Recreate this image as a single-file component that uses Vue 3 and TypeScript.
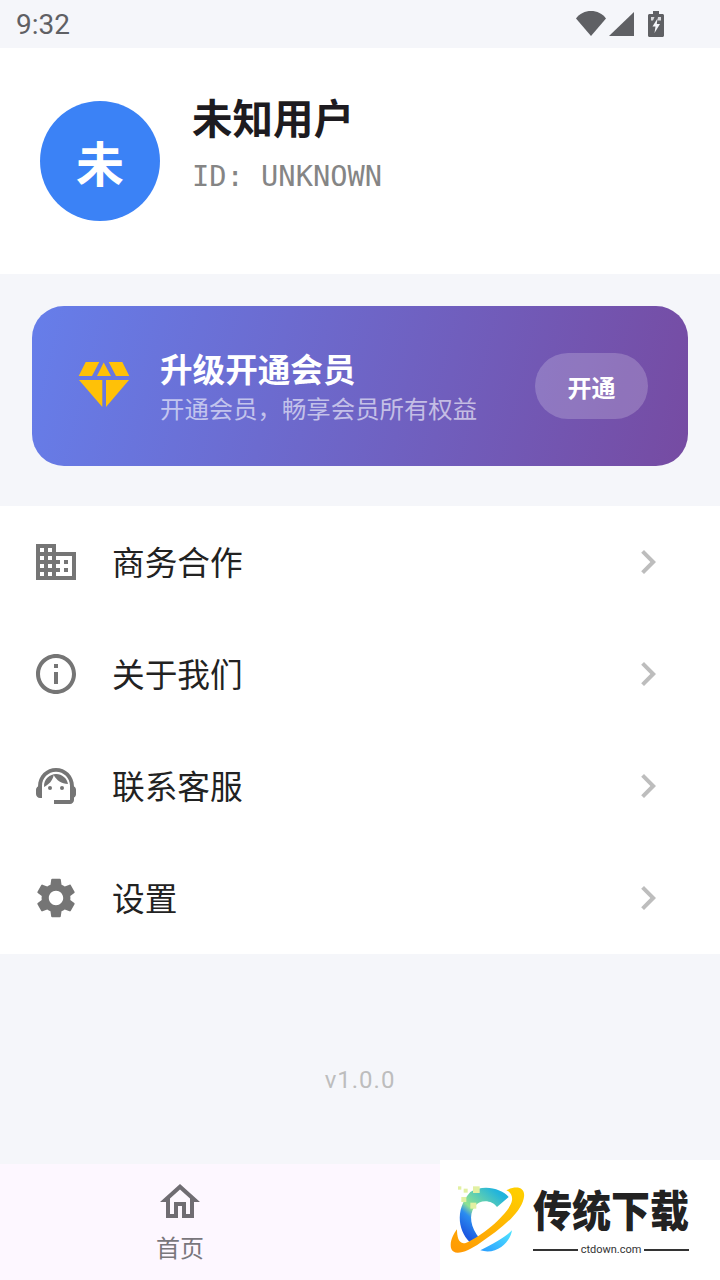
<script setup lang="ts">
interface MenuItem {
  label: string
  paths: string[]
  dots?: number[][]
}

const menu: MenuItem[] = [
  {
    label: '商务合作',
    paths: ['M12 7V3H2v18h20V7H12zM6 19H4v-2h2v2zm0-4H4v-2h2v2zm0-4H4V9h2v2zm0-4H4V5h2v2zm4 12H8v-2h2v2zm0-4H8v-2h2v2zm0-4H8V9h2v2zm0-4H8V5h2v2zm10 12h-8v-2h2v-2h-2v-2h2v-2h-2V9h8v10zm-2-8h-2v2h2v-2zm0 4h-2v2h2v-2z'],
  },
  {
    label: '关于我们',
    paths: ['M11 7h2v2h-2zm0 4h2v6h-2zm1-9C6.48 2 2 6.48 2 12s4.48 10 10 10 10-4.48 10-10S17.52 2 12 2zm0 18c-4.41 0-8-3.59-8-8s3.59-8 8-8 8 3.59 8 8-3.59 8-8 8z'],
  },
  {
    label: '联系客服',
    paths: [
      'M21 12.22C21 6.73 16.74 3 12 3c-4.69 0-9 3.65-9 9.28-.6.34-1 .98-1 1.72v2c0 1.1.9 2 2 2h1v-6.1c0-3.87 3.13-7 7-7s7 3.13 7 7V19h-8v2h8c1.1 0 2-.9 2-2v-1.22c.59-.31 1-.92 1-1.64v-2.3c0-.7-.41-1.31-1-1.62z',
      'M18 11.03C17.52 8.18 15.04 6 12.05 6c-3.03 0-6.29 2.51-6.03 6.45 2.47-1.01 4.33-3.21 4.86-5.89 1.31 2.63 4 4.44 7.12 4.47z',
    ],
    dots: [[9, 13], [15, 13]],
  },
  {
    label: '设置',
    paths: ['M19.14 12.94c.04-.3.06-.61.06-.94 0-.32-.02-.64-.07-.94l2.03-1.58c.18-.14.23-.41.12-.61l-1.92-3.32c-.12-.22-.37-.29-.59-.22l-2.39.96c-.5-.38-1.03-.7-1.62-.94l-.36-2.54c-.04-.24-.24-.41-.48-.41h-3.84c-.24 0-.43.17-.47.41l-.36 2.54c-.59.24-1.13.57-1.62.94l-2.39-.96c-.22-.08-.47 0-.59.22L2.74 8.87c-.12.21-.08.47.12.61l2.03 1.58c-.05.3-.09.63-.09.94s.02.64.07.94l-2.03 1.58c-.18.14-.23.41-.12.61l1.92 3.32c.12.22.37.29.59.22l2.39-.96c.5.38 1.03.7 1.62.94l.36 2.54c.05.24.24.41.48.41h3.84c.24 0 .44-.17.47-.41l.36-2.54c.59-.24 1.13-.56 1.62-.94l2.39.96c.22.08.47 0 .59-.22l1.92-3.32c.12-.22.07-.47-.12-.61l-2.01-1.58zM12 15.6c-1.98 0-3.6-1.62-3.6-3.6s1.62-3.6 3.6-3.6 3.6 1.62 3.6 3.6-1.62 3.6-3.6 3.6z'],
  },
]
</script>

<template>
  <div class="page">
    <div class="status">
      <span class="time">9:32</span>
      <div class="status-icons">
        <svg width="30" height="25" viewBox="0 0 30 25"><path d="M0 7.500C3.500 2.500 9 0 15 0s11.500 2.500 15 7.500L15 25z" /></svg>
        <svg width="25" height="24" viewBox="0 0 25 24"><path d="M25 0v24H0z" /></svg>
        <svg width="16" height="26" viewBox="0 0 16 26">
          <path d="M5 0h6v3h3.500c.8 0 1.500.7 1.500 1.500v20c0 .8-.7 1.500-1.500 1.500h-13C.7 26 0 25.300 0 24.500v-20C0 3.700.7 3 1.500 3H5z" />
          <path class="bat-gap" d="M3 6h3.500L5 9.500H3zM10 6h3v3.500h-3.500z" />
          <path class="bat-bolt" d="M9.500 7.500 4.500 15.500h3L6.500 22l5.500-9H8.800z" />
        </svg>
      </div>
    </div>

    <header class="profile">
      <div class="avatar">未</div>
      <div class="who">
        <div class="name">未知用户</div>
        <div class="uid">ID: UNKNOWN</div>
      </div>
    </header>

    <section class="promo-wrap">
      <div class="promo">
        <svg class="gem" width="52" height="47" viewBox="78 361 52 47">
          <path d="M85.700 362h13.600L92 376H78.700zM103.700 362.500 111 376H97zM108.700 362h13.600l7 14H116zM79 380h23.300v27zM106 380h23l-23 27z" />
        </svg>
        <div class="promo-text">
          <div class="promo-title">升级开通会员</div>
          <div class="promo-sub">开通会员，畅享会员所有权益</div>
        </div>
        <button class="open-btn">开通</button>
      </div>
    </section>

    <nav class="menu">
      <div v-for="item in menu" :key="item.label" class="row">
        <svg class="row-icon" width="48" height="48" viewBox="0 0 24 24">
          <path v-for="d in item.paths" :key="d" :d="d" />
          <circle v-for="c in item.dots" :key="c[0]" :cx="c[0]" :cy="c[1]" r="1" />
        </svg>
        <span class="row-label">{{ item.label }}</span>
        <svg class="chev" width="48" height="48" viewBox="0 0 24 24"><path d="M10 6 8.590 7.410 13.170 12l-4.580 4.590L10 18l6-6z" /></svg>
      </div>
    </nav>

    <div class="version">v1.0.0</div>

    <footer class="tabs">
      <div class="tab">
        <svg width="48" height="48" viewBox="0 0 24 24"><path d="M12 5.690l5 4.500V18h-2v-6H9v6H7v-7.810l5-4.500M12 3L2 12h3v8h6v-6h2v6h6v-8h3L12 3z" /></svg>
        <span>首页</span>
      </div>
    </footer>

    <div class="mark">
      <svg class="mark-logo" width="80" height="74" viewBox="50 80 240 222">
        <defs>
          <linearGradient id="ring" x1="0.8" y1="0" x2="0.1" y2="1">
            <stop offset="0" stop-color="#ffcd00" />
            <stop offset="1" stop-color="#ff9a05" />
          </linearGradient>
          <linearGradient id="cee" x1="0.8" y1="0.1" x2="0.2" y2="0.9">
            <stop offset="0" stop-color="#22b4dc" />
            <stop offset="0.55" stop-color="#8fe390" />
            <stop offset="0.7" stop-color="#2b8df0" />
            <stop offset="1" stop-color="#1c58e0" />
          </linearGradient>
          <linearGradient id="swoosh" x1="0" y1="1" x2="1" y2="0">
            <stop offset="0" stop-color="#2a9cff" />
            <stop offset="1" stop-color="#50e6ff" />
          </linearGradient>
        </defs>
        <path fill="url(#cee)" d="M120 110C160 85 215 100 235 125L200 155C185 135 150 130 132 155 115 180 120 215 148 250L125 266C85 235 70 165 120 110Z" />
        <path fill="url(#ring)" d="M228 105C262 88 288 98 280 130 268 180 200 228 150 262 110 290 70 305 62 278 58 258 68 238 80 222 80 245 85 270 108 262 160 240 240 170 245 135 247 120 240 110 228 105Z" />
        <path fill="url(#swoosh)" d="M150 285C190 265 225 245 245 225 240 260 200 300 150 285Z" />
        <g fill="#e2f0a2">
          <rect x="83" y="93" width="10" height="10" />
          <rect x="100" y="100" width="12" height="12" />
          <rect x="128" y="93" width="20" height="20" />
          <rect x="93" y="125" width="15" height="15" />
          <rect x="120" y="142" width="18" height="18" />
        </g>
      </svg>
      <div class="mark-text">
        <div class="mark-name">传统下载</div>
        <div class="mark-url"><i />ctdown.com<i /></div>
      </div>
    </div>
  </div>
</template>

<style>
html, body {
  margin: 0;
  background: #f5f6fa;
}
</style>

<style scoped>
.page {
  position: relative;
  display: flex;
  flex-direction: column;
  width: 720px;
  height: 1280px;
  overflow: hidden;
  background: #f5f6fa;
  font-family: "Noto Sans CJK SC", "Noto Sans", sans-serif;
  color: #222;
}

.status {
  display: flex;
  align-items: center;
  justify-content: space-between;
  height: 48px;
  padding: 0 56px 0 16px;
  box-sizing: border-box;
}

.time {
  font: 28px Roboto, sans-serif;
  color: #5f6064;
}

.status-icons {
  display: flex;
  align-items: center;
  gap: 3px;
  margin-top: -1px;
  fill: #5f6064;
}

.status-icons svg:last-child {
  margin-left: 11px;
}

.bat-gap {
  fill: #d8d9dc;
}

.bat-bolt {
  fill: #f5f6fa;
}

.profile {
  display: flex;
  align-items: center;
  gap: 33px;
  height: 226px;
  padding-left: 40px;
  box-sizing: border-box;
  background: #fff;
}

.avatar {
  display: flex;
  align-items: center;
  justify-content: center;
  width: 120px;
  height: 120px;
  border-radius: 50%;
  background: #3b82f6;
  color: #fff;
  font-size: 48px;
  font-weight: 700;
}

.who {
  margin-top: -38px;
  margin-left: -1px;
}

.name {
  font-size: 40.500px;
  font-weight: 700;
  line-height: 56px;
  color: #1d1b20;
}

.uid {
  margin-top: 12px;
  font: 28.700px "DejaVu Sans Mono", monospace;
  line-height: 38px;
  color: #858585;
}

.promo-wrap {
  padding: 32px 32px 40px;
}

.promo {
  display: flex;
  align-items: center;
  height: 160px;
  padding: 0 40px 0 46px;
  box-sizing: border-box;
  border-radius: 32px;
  background: linear-gradient(103.700deg, #667eea 0%, #764ba2 100%);
}

.gem {
  fill: #ffc107;
  flex: none;
  margin-top: -3px;
}

.promo-text {
  flex: 1;
  margin: -2px 0 0 30px;
}

.promo-title {
  font-size: 32.600px;
  font-weight: 700;
  line-height: 44px;
  margin-bottom: 2px;
  color: #fff;
}

.promo-sub {
  font-size: 24.400px;
  line-height: 32px;
  color: rgba(255, 255, 255, 0.6);
}

.open-btn {
  width: 113px;
  height: 66px;
  padding: 0;
  border: 0;
  border-radius: 33px;
  background: rgba(255, 255, 255, 0.2);
  color: #fff;
  font-family: inherit;
  font-size: 24px;
  font-weight: 700;
}

.menu {
  background: #fff;
}

.row {
  display: flex;
  align-items: center;
  height: 112px;
  padding: 0 48px 0 32px;
}

.row-icon {
  fill: #757575;
  flex: none;
}

.row-label {
  flex: 1;
  margin: 0 0 4px 32px;
  font-size: 32.700px;
  color: #222;
}

.chev {
  fill: #bdbdbd;
}

.version {
  flex: 1;
  padding-top: 108px;
  box-sizing: border-box;
  text-align: center;
  font: 400 24px/36px Roboto, sans-serif;
  letter-spacing: 1px;
  color: #bdbdbd;
}

.tabs {
  display: flex;
  height: 116px;
  background: #fdf7ff;
}

.tab {
  display: flex;
  flex-direction: column;
  align-items: center;
  width: 50%;
  padding-top: 14px;
  box-sizing: border-box;
  fill: #6f6c72;
  font-size: 24px;
  line-height: 36px;
  color: #79767c;
}

.tab span {
  margin-top: 3px;
}

.mark {
  position: absolute;
  right: 0;
  bottom: 0;
  display: flex;
  align-items: flex-start;
  width: 280px;
  height: 120px;
  background: #fff;
}

.mark-logo {
  flex: none;
  margin: 22px 0 0 7px;
}

.mark-text {
  margin: 26px 0 0 6px;
  width: 156px;
}

.mark-name {
  font-size: 39px;
  font-weight: 900;
  line-height: 40px;
  color: #222;
  white-space: nowrap;
  transform: scaleY(1.12);
  transform-origin: top;
}

.mark-url {
  display: flex;
  align-items: center;
  gap: 3px;
  margin-top: 16px;
  font: 11px/16px Roboto, sans-serif;
  color: #333;
}

.mark-url i {
  flex: 1;
  height: 2px;
  background: #333;
}
</style>
